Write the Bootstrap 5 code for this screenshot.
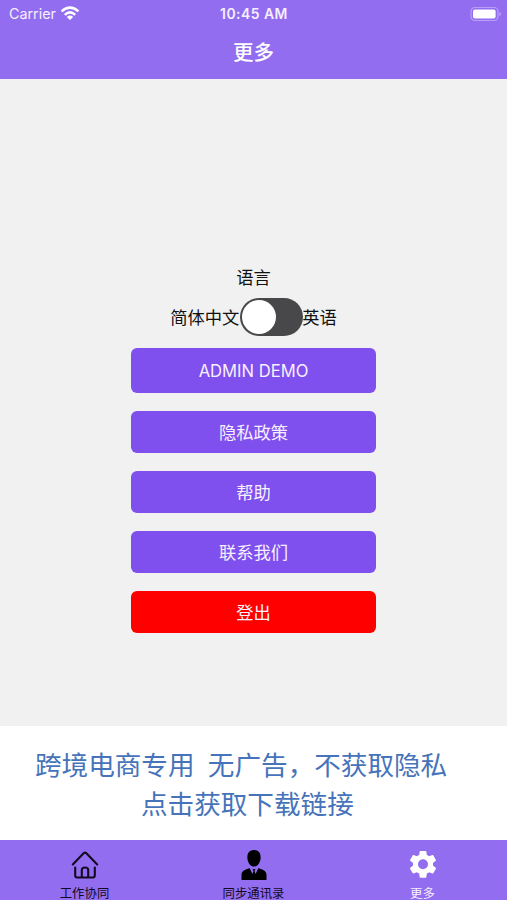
<!DOCTYPE html>
<html lang="zh-CN">
<head>
<meta charset="utf-8">
<meta name="viewport" content="width=device-width, initial-scale=1">
<title>更多</title>
<link href="https://cdn.jsdelivr.net/npm/bootstrap@5.3.0/dist/css/bootstrap.min.css" rel="stylesheet">
<style>
body{font-family:Inter,"Noto Sans CJK SC",sans-serif;background:#f1f1f1;color:#111;height:900px;overflow:hidden}
.bar{background:#926df0;color:#fff}
.top-bar{height:79px}
.status{height:27px;font-size:14px;line-height:27px;padding:0 5px 0 9px}
.status>*{flex:1 1 0}
.carrier{font-size:14.3px;color:#f6effd}
.clock{font-weight:600;font-size:13.9px;letter-spacing:.5px;color:#f6effd;padding:1px 3px 0 0}
.title{font-size:20.5px;font-weight:500;line-height:30px;margin:11px 0 0}
.content{height:647px;padding-top:186px;font-size:17.3px;line-height:26px}
.lang-row{height:38px;margin-top:7px;margin-bottom:12px}
.lang-row>span:not(.toggle){padding-top:1px}
.toggle{width:63px;height:38px;border-radius:19px;background:#48484a;padding:2px 2px 2px 2.5px;margin:0 -.5px 0 .5px}
.knob{width:34px;height:34px;border-radius:50%;background:#fff}
.menu{width:245px;gap:18.4px}
.menu .btn{height:41.5px;padding:1px 0 0;border:0;border-radius:6px;background:#7f50ee;color:#f8f0ff;font-size:17.3px;line-height:41.5px}
.menu .btn-demo{height:45px;line-height:45px;font-size:16.6px}
.menu .btn-exit{background:#f00}
.promo{height:114px;padding-top:20px;color:#4673b9;font-size:26.6px;line-height:39px;white-space:pre}
.promo-a{padding-left:35px}
.promo-b{padding-left:141px}
.tabs{height:60px;font-size:12.4px;line-height:16px}
.tabs a{color:#120a20;text-decoration:none;padding-top:9px}
.tabs a.current{color:#f8f0ff}
.tabs svg{width:32px;height:32px;flex-shrink:0}
.tabs span{margin-top:3px;height:16px;line-height:19px}
</style>
<script src="https://cdn.jsdelivr.net/npm/bootstrap@5.3.0/dist/js/bootstrap.bundle.min.js"></script>
</head>
<body class="d-flex flex-column">
<header class="bar top-bar flex-shrink-0">
  <div class="status d-flex align-items-center">
    <div class="carrier d-flex align-items-center">Carrier
      <svg class="ms-1" width="20" height="15" viewBox="0 0 20 15" fill="none" stroke="#fff" stroke-width="2.5"><path d="M1.6 5.4Q10 -2.2 18.4 5.4M4.8 8.8Q10 4 15.2 8.8"/><path d="M10 14 6.8 10.9Q10 8.2 13.2 10.9Z" fill="#fff" stroke="none"/></svg>
    </div>
    <div class="clock text-center">10:45 AM</div>
    <div class="d-flex justify-content-end">
      <svg width="32" height="16" viewBox="0 0 32 16"><rect x="1" y="1.500" width="27" height="13" rx="4" fill="none" stroke="#b9a0f6" stroke-width="1.2"/><rect x="3" y="3.600" width="22.600" height="8.800" rx="2" fill="#fff"/><path d="M29.300 6v4q2-.8 2-2t-2-2" fill="#b9a0f6"/></svg>
    </div>
  </div>
  <h1 class="title text-center">更多</h1>
</header>
<main class="content flex-shrink-0 d-flex flex-column align-items-center">
  <div>语言</div>
  <div class="lang-row d-flex align-items-center justify-content-center">
    <span>简体中文</span><span class="toggle d-block" role="switch" aria-checked="false"><span class="knob d-block"></span></span><span>英语</span>
  </div>
  <div class="menu d-grid">
    <button class="btn btn-demo">ADMIN DEMO</button>
    <button class="btn">隐私政策</button>
    <button class="btn">帮助</button>
    <button class="btn">联系我们</button>
    <button class="btn btn-exit">登出</button>
  </div>
</main>
<section class="promo bg-white flex-shrink-0"><div class="promo-a">跨境电商专用&ensp;无广告，不获取隐私</div><div class="promo-b">点击获取下载链接</div></section>
<nav class="bar tabs d-flex flex-shrink-0">
  <a href="#" class="flex-fill w-100 d-flex flex-column align-items-center">
    <svg viewBox="0 0 32 32" fill="none" stroke="#120a20" stroke-width="2.1" stroke-linecap="round" stroke-linejoin="round"><path d="M3.800 15.500 14.600 4.300Q16 3.100 17.400 4.300L28.200 15.500M6.200 18.500v8q0 2 2 2h15.600q2 0 2-2v-8M12.800 28.500v-7.500q0-2.500 3.200-2.500t3.200 2.500V28.500"/></svg>
    <span>工作协同</span>
  </a>
  <a href="#" class="flex-fill w-100 d-flex flex-column align-items-center">
    <svg viewBox="0 0 32 32" fill="#000"><path d="M16 1c4.800 0 7 3.500 6.600 8.200-.4 4.700-3.200 8.300-6.600 8.300s-6.200-3.600-6.600-8.300C9 4.500 11.200 1 16 1M11.500 19l3 6 1-3-1-2h3l-1 2 1 3 3-6c4 1.800 8 2.600 8 7v5h-25V26c0-4.400 4-5.200 8-7"/></svg>
    <span>同步通讯录</span>
  </a>
  <a href="#" class="current flex-fill w-100 d-flex flex-column align-items-center">
    <svg viewBox="0.500 1 23 23" fill="#fff"><path d="M19.140 12.940c.04-.3.060-.61.060-.94 0-.32-.02-.64-.07-.94l2.030-1.580c.18-.14.230-.41.120-.61l-1.920-3.320c-.12-.22-.37-.29-.59-.22l-2.390.96c-.5-.38-1.030-.7-1.620-.94l-.36-2.540c-.04-.24-.24-.41-.48-.41h-3.840c-.24 0-.43.170-.47.410l-.36 2.540c-.59.240-1.130.570-1.620.940l-2.390-.96c-.22-.08-.47 0-.59.220L2.740 8.870c-.12.210-.08.470.12.610l2.030 1.580c-.05.300-.09.630-.09.940s.02.640.07.940l-2.030 1.580c-.18.140-.23.410-.12.610l1.920 3.320c.12.220.37.290.59.220l2.390-.96c.5.380 1.030.700 1.620.940l.36 2.540c.05.240.24.410.48.410h3.840c.24 0 .44-.17.470-.41l.36-2.540c.59-.24 1.130-.56 1.620-.94l2.390.96c.22.080.47 0 .59-.22l1.920-3.320c.12-.22.070-.47-.12-.61zM12 15.600A3.600 3.600 0 1 1 12 8.400a3.600 3.600 0 0 1 0 7.200"/></svg>
    <span>更多</span>
  </a>
</nav>
</body>
</html>
